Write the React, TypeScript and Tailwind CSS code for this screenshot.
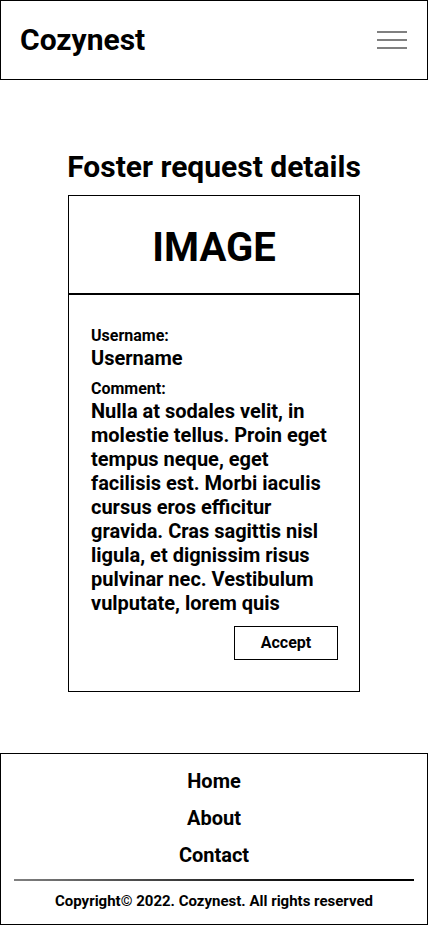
export default function App() {
  return (
    <div className="min-h-[926px] bg-white text-black flex flex-col font-['Roboto',sans-serif]">
      <header className="h-[80px] border border-black flex items-center justify-between pl-[19px] pr-[20px]">
        <h1 className="text-[30px] font-bold leading-none">Cozynest</h1>
        <button className="flex flex-col gap-[6px] w-[30px]">
          <span className="block h-[2px] w-full bg-[#808080]" />
          <span className="block h-[2px] w-full bg-[#808080]" />
          <span className="block h-[2px] w-full bg-[#808080]" />
        </button>
      </header>

      <main className="flex flex-col items-center pt-[69px]">
        <h2 className="text-[30px] leading-[36px] font-bold text-center">
          Foster request details
        </h2>
        <div className="mt-[10px] w-[292px] border border-black">
          <div className="h-[99px] pt-[6px] border-b-2 border-black flex items-center justify-center">
            <span className="text-[40px] font-bold leading-none">IMAGE</span>
          </div>
          <div className="pt-[31px] pb-[31px] pl-[22px] pr-[21px] flex flex-col">
            <p className="text-[16px] leading-[20px] font-bold">Username:</p>
            <p className="text-[20px] leading-[24px] font-bold">Username</p>
            <p className="mt-[9px] text-[16px] leading-[20px] font-bold">
              Comment:
            </p>
            <p className="text-[20px] leading-[24px] font-bold">
              Nulla at sodales velit, in molestie tellus. Proin eget tempus
              neque, eget facilisis est. Morbi iaculis cursus eros efficitur
              gravida. Cras sagittis nisl ligula, et dignissim risus pulvinar
              nec. Vestibulum vulputate, lorem quis
            </p>
            <div className="flex justify-end mt-[11px]">
              <button className="w-[104px] h-[34px] border border-black text-[16px] font-bold">
                Accept
              </button>
            </div>
          </div>
        </div>
      </main>

      <footer className="mt-[61px] border border-black flex flex-col items-center pt-[13px] pb-[13px]">
        <nav className="flex flex-col items-center gap-[9px]">
          <a className="text-[20px] leading-[28px] font-bold">Home</a>
          <a className="text-[20px] leading-[28px] font-bold">About</a>
          <a className="text-[20px] leading-[28px] font-bold">Contact</a>
        </nav>
        <div className="mt-[10px] self-stretch mx-[13px] h-[2px] bg-gradient-to-r from-[#808080] to-black" />
        <p className="mt-[10px] text-[15px] leading-[20px] font-bold">
          Copyright© 2022. Cozynest. All rights reserved
        </p>
      </footer>
    </div>
  );
}
